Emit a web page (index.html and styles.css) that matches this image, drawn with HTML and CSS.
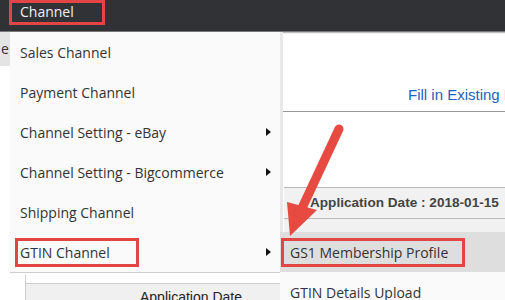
FILE: index.html
```html
<!DOCTYPE html>
<html lang="en">
<head>
  <meta charset="UTF-8">
  <meta name="viewport" content="width=device-width, initial-scale=1.0">
  <title>Channel Menu</title>
  <link rel="stylesheet" href="styles.css">
</head>
<body>
  <header class="topbar">
    <span class="nav-item mark">Channel</span>
  </header>

  <div class="page">
    <aside class="sidebar">
      <div class="side-item">e</div>
      <div class="side-table">
        <div class="th">Application Date</div>
      </div>
    </aside>

    <main class="content">
      <div class="toolbar">
        <a class="link" href="#">Fill in Existing Membership</a>
      </div>
      <div class="panel">
        <div class="panel-row">Application Date : 2018-01-15</div>
      </div>
    </main>
  </div>

  <!-- dropdown -->
  <ul class="menu">
    <li>Sales Channel</li>
    <li>Payment Channel</li>
    <li class="has-sub">Channel Setting - eBay</li>
    <li class="has-sub">Channel Setting - Bigcommerce</li>
    <li>Shipping Channel</li>
    <li class="has-sub"><span class="mark mark-gtin">GTIN Channel</span></li>
  </ul>

  <ul class="submenu">
    <li class="active"><span class="mark mark-gs1">GS1 Membership Profile</span></li>
    <li>GTIN Details Upload</li>
  </ul>

  <!-- annotation arrow -->
  <svg class="arrow" width="505" height="300" viewBox="0 0 505 300">
    <line x1="339" y1="129" x2="303" y2="206" stroke="#e64a41" stroke-width="9" stroke-linecap="round"/>
    <polygon points="287,202 317,210 290,236" fill="#e64a41"/>
  </svg>
</body>
</html>
```

FILE: styles.css
```css
body {
  margin: 0;
  width: 505px;
  height: 300px;
  overflow: hidden;
  position: relative;
  font-family: "Open Sans", sans-serif;
  font-size: 14px;
  color: #333;
  background: #fff;
}
.topbar {
  height: 31px;
  background-color: #303236;
  border-bottom: 1px solid #777;
  box-shadow: 0 1px 1px #bbb;
  padding-left: 9px;
}
.mark {
  display: inline-block;
  box-sizing: border-box;
  border: 3px solid #e34545;
}
.nav-item {
  width: 96px;
  height: 25px;
  line-height: 17px;
  padding: 0 8px;
  color: #eef0f3;
}
.page {
  display: flex;
}
.sidebar {
  width: 280px;
  flex-shrink: 0;
}
.side-item {
  width: 10px;
  height: 34px;
  line-height: 34px;
  background-color: #e4e4e4;
  padding-left: 1px;
  box-sizing: border-box;
  color: #333;
}
.side-table {
  margin: 209px 0 0 25px;
  padding-top: 8px;
  border-left: 1px solid #ccc;
}
.th {
  border-top: 1px solid #ccc;
  background-color: #f0f0f0;
  padding-left: 114px;
  line-height: 26px;
  font-family: "Liberation Sans", Arial, sans-serif;
  color: #222;
  white-space: nowrap;
}
.content {
  flex: 1;
  min-width: 0;
}
.toolbar {
  height: 80px;
  border-bottom: 1px solid #999;
  display: flex;
  align-items: flex-end;
  padding: 0 0 6px 128px;
  box-sizing: border-box;
  white-space: nowrap;
  overflow: hidden;
}
.link {
  font-family: "Liberation Sans", Arial, sans-serif;
  font-size: 15px;
  line-height: 20px;
  color: #1f5fbf;
  text-decoration: none;
}
.panel {
  margin: 75px 0 0 4px;
  border-top: 1px solid #bbb;
  background-color: #f1f1f1;
  height: 120px;
}
.panel-row {
  height: 30px;
  line-height: 30px;
  border-bottom: 1px solid #bbb;
  padding-left: 26px;
  font-family: "Liberation Sans", Arial, sans-serif;
  font-size: 13.6px;
  font-weight: bold;
  color: #444;
  white-space: nowrap;
}
.menu,
.submenu {
  list-style: none;
  margin: 0;
  padding: 0;
  position: absolute;
  background-color: #fafafa;
}
.menu {
  top: 32px;
  left: 10px;
  width: 270px;
  border-right: 3px solid #e8e8e8;
  border-bottom: 1px solid #ccc;
}
.submenu {
  top: 232px;
  left: 280px;
  width: 240px;
}
.menu li,
.submenu li {
  height: 40px;
  display: flex;
  align-items: center;
  padding: 0 10px;
  position: relative;
  white-space: nowrap;
}
.has-sub::after {
  content: "";
  position: absolute;
  right: 9px;
  top: 50%;
  margin-top: -4px;
  border-left: 5px solid #111;
  border-top: 4px solid transparent;
  border-bottom: 4px solid transparent;
}
.mark-gtin {
  width: 124px;
  height: 29px;
  line-height: 23px;
  margin-left: -5px;
  padding-left: 2px;
}
.submenu .active {
  background-color: #dedede;
}
.mark-gs1 {
  width: 184px;
  height: 29px;
  line-height: 23px;
  margin-left: -9px;
  padding-left: 6px;
}
.arrow {
  position: absolute;
  top: 0;
  left: 0;
  pointer-events: none;
}
```
